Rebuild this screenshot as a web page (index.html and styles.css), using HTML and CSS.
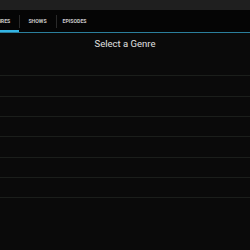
FILE: index.html
```html
<!DOCTYPE html>
<html lang="en">
<head>
  <meta charset="UTF-8">
  <title>Genres</title>
  <link rel="stylesheet" href="styles.css">
</head>
<body>
  <div class="status-bar"></div>

  <div class="tabs">
    <div class="tab-strip">
      <div class="tab active">GENRES</div>
      <div class="tab">SHOWS</div>
      <div class="tab">EPISODES</div>
    </div>
  </div>

  <h1 class="title">Select a Genre</h1>

  <ul class="genre-list">
    <li></li>
    <li></li>
    <li></li>
    <li></li>
    <li></li>
    <li></li>
    <li></li>
  </ul>
</body>
</html>
```

FILE: styles.css
```css
html, body {
  margin: 0;
  height: 100%;
}
body {
  font-family: Roboto, 'Liberation Sans', sans-serif;
  background-color: #0a0a0a;
  overflow: hidden;
}
.status-bar {
  height: 10px;
  background-color: #1f1f1f;
}
.tabs {
  height: 22px;
  background-color: #050505;
  border-bottom: 1px solid #2b7f9c;
  overflow: hidden;
}
.tab-strip {
  display: flex;
  height: 100%;
  margin-left: -18px;
}
.tab {
  position: relative;
  width: 37px;
  display: flex;
  align-items: center;
  justify-content: center;
  font-size: 5.2px;
  font-weight: bold;
  color: #c8c8c8;
}
.tab + .tab::before {
  content: '';
  position: absolute;
  left: 0;
  top: 5px;
  bottom: 4px;
  width: 1px;
  background-color: #2a2a2a;
}
.tab.active::after {
  content: '';
  position: absolute;
  left: 0;
  right: 0;
  bottom: 0;
  height: 2px;
  background-color: #33b5e5;
}
.title {
  margin: 0;
  height: 23px;
  line-height: 22px;
  text-align: center;
  font-size: 9.5px;
  font-weight: normal;
  color: #e0e0e0;
}
.genre-list {
  list-style: none;
  margin: 0;
  padding: 0;
}
.genre-list li {
  height: 19.35px;
  border-bottom: 1px solid #1b1e1b;
}
```
